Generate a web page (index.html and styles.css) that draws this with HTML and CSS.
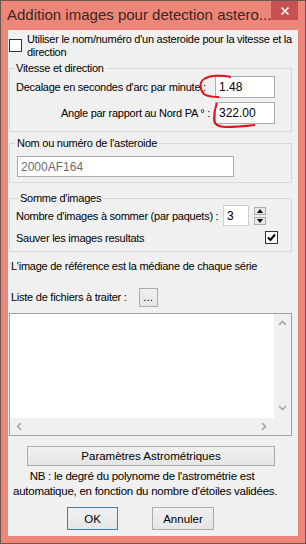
FILE: index.html
```html
<!DOCTYPE html>
<html lang="fr">
<head>
    <meta charset="UTF-8">
    <meta name="viewport" content="width=device-width, initial-scale=1.0">
    <title>Addition images pour detection asteroide</title>
    <link rel="stylesheet" href="styles.css">
</head>
<body>

    <div class="window">
        <div class="titlebar">
            <span class="title">Addition images pour detection astero...</span>
            <span class="close">
                <svg width="10" height="10" viewBox="0 0 10 10"><path d="M1.5 1.5 L8.5 8.5 M8.5 1.5 L1.5 8.5" stroke="#fff" stroke-width="1.6"/></svg>
            </span>
        </div>

        <div class="client">
            <div class="check-row">
                <span class="checkbox"></span>
                <span class="check-text">Utiliser le nom/numéro d'un asteroide pour la vitesse et la direction</span>
            </div>

            <fieldset class="group group-speed">
                <legend>Vitesse et direction</legend>
                <div class="field-grid">
                    <span class="field-label">Decalage en secondes d'arc par minute :</span>
                    <span class="edit">1.48</span>
                    <span class="field-label">Angle par rapport au Nord PA ° :</span>
                    <span class="edit">322.00</span>
                </div>
            </fieldset>

            <fieldset class="group group-name">
                <legend>Nom ou numéro de l'asteroide</legend>
                <span class="edit edit-disabled">2000AF164</span>
            </fieldset>

            <fieldset class="group group-sum">
                <legend>Somme d'images</legend>
                <div class="sum-row">
                    <span>Nombre d'images à sommer (par paquets) :</span>
                    <span class="spinner">
                        <span class="edit spin-edit">3</span>
                        <span class="spin-buttons">
                            <span class="spin-btn"><svg width="6" height="4" viewBox="0 0 6 4"><path d="M0 4 L3 0 L6 4 Z" fill="#000"/></svg></span>
                            <span class="spin-btn"><svg width="6" height="4" viewBox="0 0 6 4"><path d="M0 0 L3 4 L6 0 Z" fill="#000"/></svg></span>
                        </span>
                    </span>
                </div>
                <div class="sum-row save-row">
                    <span>Sauver les images resultats</span>
                    <span class="checkbox checked">
                        <svg width="11" height="11" viewBox="0 0 11 11"><path d="M2 5.5 L4.5 8 L9 2.5" stroke="#000" stroke-width="2" fill="none"/></svg>
                    </span>
                </div>
            </fieldset>

            <p class="note">L'image de référence est la médiane de chaque série</p>

            <div class="files-row">
                <span>Liste de fichiers à traiter :</span>
                <span class="button small-btn">...</span>
            </div>

            <div class="listbox">
                <div class="list-area"></div>
                <div class="vscroll">
                    <svg width="9" height="6" viewBox="0 0 9 6"><path d="M1 5 L4.5 1.5 L8 5" stroke="#a8a8a8" stroke-width="1.6" fill="none"/></svg>
                    <svg width="9" height="6" viewBox="0 0 9 6"><path d="M1 1 L4.5 4.5 L8 1" stroke="#a8a8a8" stroke-width="1.6" fill="none"/></svg>
                </div>
                <div class="hscroll">
                    <svg width="6" height="9" viewBox="0 0 6 9"><path d="M5 1 L1.5 4.5 L5 8" stroke="#a8a8a8" stroke-width="1.6" fill="none"/></svg>
                    <svg width="6" height="9" viewBox="0 0 6 9"><path d="M1 1 L4.5 4.5 L1 8" stroke="#a8a8a8" stroke-width="1.6" fill="none"/></svg>
                </div>
                <div class="corner"></div>
            </div>

            <div class="button param-btn">Paramètres Astrométriques</div>

            <p class="nb">NB : le degré du polynome de l'astrométrie est<br>automatique, en fonction du nombre d'étoiles validées.</p>

            <div class="dialog-buttons">
                <span class="button default-btn ok-btn">OK</span>
                <span class="button cancel-btn">Annuler</span>
            </div>
        </div>

        <!-- red marks drawn over the screenshot -->
        <svg class="marks" width="306" height="544" viewBox="0 0 306 544">
            <path d="M231 77 C222 75 210 75 204 79 C199 82 200 90 204 94 C208 97 213 97 219 97" stroke="#e3141b" stroke-width="2" fill="none"/>
            <path d="M217 103 C215 108 214 114 214 119 C214 124 218 127 226 127 C236 127 246 126 255 125" stroke="#e3141b" stroke-width="2" fill="none"/>
        </svg>
    </div>

</body>
</html>
```

FILE: styles.css
```css
body {
    margin: 0;
    font-family: "Liberation Sans", Arial, sans-serif;
    font-size: 11px;
    letter-spacing: -0.25px;
    color: #000;
}
.window {
    position: relative;
    width: 306px;
    height: 544px;
    box-sizing: border-box;
    border: 1px solid #6f5550;
    background-color: #ec8679;
    padding: 0 7px 7px 7px;
    display: flex;
    flex-direction: column;
}
.titlebar {
    height: 29px;
    display: flex;
    justify-content: space-between;
    align-items: flex-start;
}
.title {
    font-size: 15px;
    letter-spacing: 0;
    color: #3d2622;
    margin: 5px 0 0 -1px;
    white-space: nowrap;
}
.close {
    width: 27px;
    height: 19px;
    background-color: #c75050;
    display: flex;
    align-items: center;
    justify-content: center;
}
.client {
    flex: 1;
    background-color: #f0f0f0;
    padding: 0 6px 0 1px;
}
.check-row {
    display: flex;
    align-items: flex-start;
    gap: 5px;
    margin-top: 3px;
    line-height: 13px;
}
.checkbox {
    width: 11px;
    height: 11px;
    flex: none;
    border: 1px solid #333;
    background-color: #fff;
    display: flex;
    align-items: center;
    justify-content: center;
}
.check-row .checkbox {
    margin-top: 6px;
}
.check-text {
    width: 270px;
}
.group {
    margin: 0;
    border: 1px solid #d9d9d9;
    padding: 0 16px 7px 6px;
}
.group legend {
    padding: 0 2px;
    margin-left: -2px;
    line-height: 13px;
}
.group-speed {
    margin-top: 3px;
    padding-top: 1px;
}
.field-grid {
    display: grid;
    grid-template-columns: 1fr 60px;
    column-gap: 5px;
    row-gap: 4px;
    align-items: center;
}
.field-label {
    text-align: right;
    white-space: nowrap;
}
.field-grid .field-label:first-child {
    text-align: left;
}
.edit {
    box-sizing: border-box;
    height: 22px;
    border: 1px solid #abadb3;
    background-color: #fff;
    padding: 0 3px;
    display: flex;
    align-items: center;
    font-size: 12px;
    letter-spacing: 0;
}
.group-name {
    margin-top: 5px;
    padding-top: 6px;
    padding-bottom: 5px;
}
.group-name legend {
    margin-left: -1px;
}
.edit-disabled {
    width: 217px;
    height: 21px;
    margin-left: 1px;
    color: #6d6d6d;
}
.group-sum {
    margin-top: 9px;
    padding: 0 13px 5px 6px;
}
.group-sum legend {
    margin-left: 2px;
}
.sum-row {
    display: flex;
    justify-content: space-between;
    align-items: center;
}
.save-row {
    margin-top: 3px;
    height: 17px;
}
.spinner {
    display: flex;
    align-items: center;
    gap: 5px;
    margin-right: 12px;
}
.spin-edit {
    width: 26px;
    height: 21px;
    border-color: #d0d0d0;
}
.spin-buttons {
    display: flex;
    flex-direction: column;
    gap: 2px;
}
.spin-btn {
    box-sizing: border-box;
    width: 12px;
    height: 8px;
    border: 1px solid #acacac;
    background-color: #e8e8e8;
    display: flex;
    align-items: center;
    justify-content: center;
}
.note {
    margin: 8px 0 0 2px;
    line-height: 13px;
}
.files-row {
    display: flex;
    align-items: center;
    gap: 12px;
    margin: 15px 0 0 2px;
    height: 18px;
}
.button {
    box-sizing: border-box;
    border: 1px solid #acacac;
    background: linear-gradient(#f0f0f0, #e5e5e5);
    display: flex;
    align-items: center;
    justify-content: center;
    font-size: 11.5px;
    letter-spacing: 0;
}
.small-btn {
    width: 19px;
    height: 19px;
}
.listbox {
    margin-top: 7px;
    height: 123px;
    box-sizing: border-box;
    border: 1px solid #a0a0a0;
    display: grid;
    grid-template-columns: 1fr 17px;
    grid-template-rows: 1fr 17px;
}
.list-area {
    background-color: #fff;
}
.vscroll {
    background-color: #f0f0f0;
    display: flex;
    flex-direction: column;
    justify-content: space-between;
    align-items: center;
    padding: 6px 0 7px;
}
.hscroll {
    background-color: #f0f0f0;
    display: flex;
    justify-content: space-between;
    align-items: center;
    padding: 0 7px 0 6px;
}
.corner {
    background-color: #f0f0f0;
}
.param-btn {
    margin: 10px 0 0 18px;
    width: 248px;
    height: 20px;
}
.nb {
    margin: 3px 0 0 4px;
    width: 258px;
    text-align: center;
    line-height: 15px;
    white-space: nowrap;
    font-size: 11.5px;
}
.dialog-buttons {
    display: flex;
    gap: 34px;
    margin: 8px 0 0 58px;
}
.ok-btn {
    width: 51px;
    height: 23px;
}
.default-btn {
    border-color: #3c7fb1;
}
.cancel-btn {
    width: 62px;
    height: 23px;
}
.marks {
    position: absolute;
    left: -1px;
    top: -1px;
    pointer-events: none;
}
```
